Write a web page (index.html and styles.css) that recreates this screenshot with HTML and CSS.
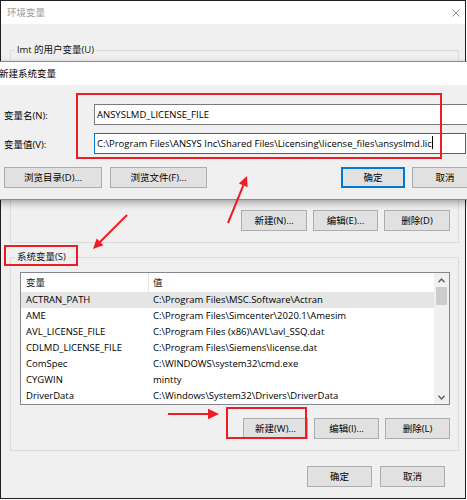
FILE: index.html
```html
<!DOCTYPE html>
<html lang="zh-CN">
<head>
<meta charset="utf-8">
<title>环境变量</title>
<link rel="stylesheet" href="styles.css">
</head>
<body>
<div class="win">
  <div class="titlebar">
    <span class="title">环境变量</span>
    <svg class="close" width="8" height="8" viewBox="0 0 8 8"><path d="M0.5 0.5L7.5 7.5M7.5 0.5L0.5 7.5" stroke="#8a8a8a" stroke-width="1" fill="none"/></svg>
  </div>
  <div class="body">
    <fieldset class="group user-group">
      <legend>lmt 的用户变量(U)</legend>
      <div class="listbox user-list"></div>
      <div class="btn-row">
        <button class="btn w66">新建(N)...</button>
        <button class="btn w65">编辑(E)...</button>
        <button class="btn w66">删除(D)</button>
      </div>
    </fieldset>
    <fieldset class="group sys-group">
      <legend>系统变量(S)</legend>
      <div class="listview">
        <div class="lv-main">
          <div class="lv-header"><span class="c1">变量</span><span class="c2">值</span></div>
          <div class="lv-row selected"><span class="c1">ACTRAN_PATH</span><span class="c2">C:\Program Files\MSC.Software\Actran</span></div>
          <div class="lv-row"><span class="c1">AME</span><span class="c2">C:\Program Files\Simcenter\2020.1\Amesim</span></div>
          <div class="lv-row"><span class="c1">AVL_LICENSE_FILE</span><span class="c2">C:\Program Files (x86)\AVL\avl_SSQ.dat</span></div>
          <div class="lv-row"><span class="c1">CDLMD_LICENSE_FILE</span><span class="c2">C:\Program Files\Siemens\license.dat</span></div>
          <div class="lv-row"><span class="c1">ComSpec</span><span class="c2">C:\WINDOWS\system32\cmd.exe</span></div>
          <div class="lv-row"><span class="c1">CYGWIN</span><span class="c2">mintty</span></div>
          <div class="lv-row"><span class="c1">DriverData</span><span class="c2">C:\Windows\System32\Drivers\DriverData</span></div>
        </div>
        <div class="scrollbar">
          <div class="sb-arrow"><svg width="7" height="5" viewBox="0 0 7 5"><polyline points="0.5,4.2 3.5,1 6.5,4.2" fill="none" stroke="#5a5a5a" stroke-width="1.3"/></svg></div>
          <div class="sb-thumb"></div>
          <div class="sb-track"></div>
          <div class="sb-arrow"><svg width="7" height="5" viewBox="0 0 7 5"><polyline points="0.5,0.8 3.5,4 6.5,0.8" fill="none" stroke="#5a5a5a" stroke-width="1.3"/></svg></div>
        </div>
      </div>
      <div class="btn-row">
        <button class="btn w65">新建(W)...</button>
        <button class="btn w65">编辑(I)...</button>
        <button class="btn w65">删除(L)</button>
      </div>
    </fieldset>
    <div class="footer">
      <button class="btn w65">确定</button>
      <button class="btn w65">取消</button>
    </div>
  </div>
</div>

<div class="dialog">
  <div class="dlg-title">新建系统变量</div>
  <div class="dlg-body">
    <div class="form">
      <label class="lbl">变量名(N):</label>
      <div class="input">ANSYSLMD_LICENSE_FILE</div>
      <label class="lbl">变量值(V):</label>
      <div class="input focused">C:\Program Files\ANSYS Inc\Shared Files\Licensing\license_files\ansyslmd.lic<span class="caret"></span></div>
    </div>
    <div class="dlg-buttons">
      <button class="btn w98">浏览目录(D)...</button>
      <button class="btn w97">浏览文件(F)...</button>
      <button class="btn w64 default push">确定</button>
      <button class="btn w66">取消</button>
    </div>
  </div>
</div>

<svg class="annot" width="467" height="500" viewBox="0 0 467 500">
  <g fill="none" stroke="#ee1c25" stroke-width="2">
    <rect x="77" y="94" width="364" height="64"/>
    <rect x="5" y="246" width="72" height="19"/>
    <rect x="227" y="408" width="79" height="30"/>
    <line x1="228" y1="223" x2="243.3" y2="185.3"/>
    <line x1="127" y1="215" x2="100" y2="242"/>
    <line x1="168" y1="414" x2="210" y2="414"/>
  </g>
  <g fill="#ee1c25">
    <polygon points="247,176 247.6,187.2 238.9,183.6"/>
    <polygon points="93,249 103.4,245.3 96.7,238.6"/>
    <polygon points="219,414 208,408.8 208,419.2"/>
  </g>
</svg>
</body>
</html>
```

FILE: styles.css
```css
* { box-sizing: border-box; }

html, body {
  margin: 0;
  padding: 0;
  background: #ffffff;
}

body {
  position: relative;
  width: 467px;
  height: 500px;
  overflow: hidden;
  font-family: "Open Sans", "Noto Sans CJK SC", sans-serif;
  font-size: 9.5px;
  color: #000;
}

.win {
  width: 466px;
  height: 499px;
  border: 1px solid #1e1e1e;
  background: #f0f0f0;
}

.titlebar {
  height: 23px;
  background: #fff;
  display: flex;
  align-items: center;
  justify-content: space-between;
  padding: 0 5px 0 6px;
}

.title {
  color: #9a9a9a;
  line-height: 23px;
}

.body {
  padding: 19px 6px 0 9px;
}

fieldset.group {
  margin: 0;
  padding: 0;
  border: 1px solid #dcdcdc;
  min-width: 0;
}

fieldset.group legend {
  margin-left: 4px;
  padding: 0 2px;
  line-height: 14px;
  color: #111;
}

.sys-group {
  margin-top: 7px !important;
}

.listbox {
  margin: 5px 8px 0 9px;
  height: 134px;
  border: 1px solid #828790;
  background: #fff;
}

.btn-row {
  display: flex;
  justify-content: flex-end;
  gap: 6px;
  margin: 14px 8px 11px 0;
}

.sys-group .btn-row {
  margin-top: 13px;
}

.btn {
  height: 21px;
  padding: 0;
  border: 1px solid #adadad;
  background: #e1e1e1;
  font: inherit;
  color: #000;
  line-height: 19px;
  text-align: center;
  white-space: nowrap;
}

.w64 { width: 64px; }
.w65 { width: 65px; }
.w66 { width: 66px; }
.w97 { width: 97px; }
.w98 { width: 98px; }

.listview {
  display: flex;
  margin: 8px 8px 0 9px;
  height: 133px;
  border: 1px solid #828790;
  background: #fff;
}

.lv-main {
  flex: 1;
  min-width: 0;
}

.lv-header,
.lv-row {
  display: flex;
  height: 16px;
  line-height: 16px;
  white-space: nowrap;
}

.lv-header {
  height: 19px;
  line-height: 19px;
  color: #222;
}

.c1 {
  width: 128px;
  flex: none;
  padding-left: 5px;
}

.lv-header .c1 {
  border-right: 1px solid #e5e5e5;
}

.c2 {
  flex: 1;
  padding-left: 4px;
  overflow: hidden;
}

.lv-row.selected {
  background: #e5e5e5;
}

.scrollbar {
  width: 15px;
  flex: none;
  background: #f0f0f0;
  display: flex;
  flex-direction: column;
}

.sb-arrow {
  height: 14px;
  display: flex;
  align-items: center;
  justify-content: center;
}

.sb-thumb {
  height: 18px;
  margin: 0 2px;
  background: #cdcdcd;
}

.sb-track {
  flex: 1;
}

.footer {
  display: flex;
  justify-content: flex-end;
  gap: 8px;
  margin-top: 15px;
  padding-right: 14px;
}

/* overlay dialog */
.dialog {
  position: absolute;
  left: -10px;
  top: 61px;
  width: 500px;
  height: 139px;
  border: 1px solid #8c8c8c;
  background: #f0f0f0;
  box-shadow: 0 3px 7px rgba(0, 0, 0, 0.32);
}

.dlg-title {
  height: 23px;
  line-height: 23px;
  background: #fff;
  padding-left: 8px;
  color: #000;
}

.dlg-body {
  padding: 19px 11px 0 13px;
}

.form {
  display: grid;
  grid-template-columns: 90px 1fr;
  grid-auto-rows: 21px;
  row-gap: 8px;
  align-items: center;
}

.input {
  height: 21px;
  line-height: 19px;
  border: 1px solid #7a7a7a;
  background: #fff;
  padding-left: 2px;
  white-space: nowrap;
  overflow: hidden;
}

.input.focused {
  border-color: #0078d7;
  margin-right: 12px;
}

.caret {
  display: inline-block;
  width: 1px;
  height: 13px;
  background: #000;
  vertical-align: -2px;
}

.dlg-buttons {
  display: flex;
  gap: 8px;
  margin-top: 13px;
}

.dlg-buttons .push {
  margin-left: auto;
  margin-right: -1px;
}

.btn.default {
  border-color: #0078d7;
  box-shadow: inset 0 0 0 1px #0078d7;
}

.annot {
  position: absolute;
  left: 0;
  top: 0;
  pointer-events: none;
}
```
